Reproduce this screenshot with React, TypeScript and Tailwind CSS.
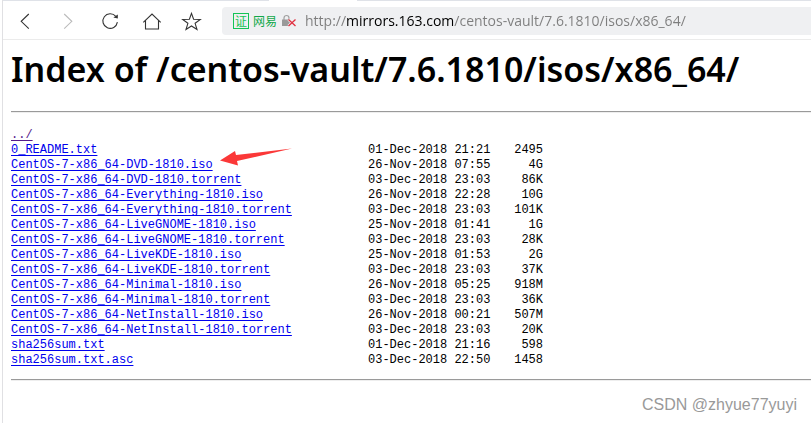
type Entry = { name: string; date: string; size: string };

const entries: Entry[] = [
  { name: "0_README.txt", date: "01-Dec-2018 21:21", size: "2495" },
  { name: "CentOS-7-x86_64-DVD-1810.iso", date: "26-Nov-2018 07:55", size: "4G" },
  { name: "CentOS-7-x86_64-DVD-1810.torrent", date: "03-Dec-2018 23:03", size: "86K" },
  { name: "CentOS-7-x86_64-Everything-1810.iso", date: "26-Nov-2018 22:28", size: "10G" },
  { name: "CentOS-7-x86_64-Everything-1810.torrent", date: "03-Dec-2018 23:03", size: "101K" },
  { name: "CentOS-7-x86_64-LiveGNOME-1810.iso", date: "25-Nov-2018 01:41", size: "1G" },
  { name: "CentOS-7-x86_64-LiveGNOME-1810.torrent", date: "03-Dec-2018 23:03", size: "28K" },
  { name: "CentOS-7-x86_64-LiveKDE-1810.iso", date: "25-Nov-2018 01:53", size: "2G" },
  { name: "CentOS-7-x86_64-LiveKDE-1810.torrent", date: "03-Dec-2018 23:03", size: "37K" },
  { name: "CentOS-7-x86_64-Minimal-1810.iso", date: "26-Nov-2018 05:25", size: "918M" },
  { name: "CentOS-7-x86_64-Minimal-1810.torrent", date: "03-Dec-2018 23:03", size: "36K" },
  { name: "CentOS-7-x86_64-NetInstall-1810.iso", date: "26-Nov-2018 00:21", size: "507M" },
  { name: "CentOS-7-x86_64-NetInstall-1810.torrent", date: "03-Dec-2018 23:03", size: "20K" },
  { name: "sha256sum.txt", date: "01-Dec-2018 21:16", size: "598" },
  { name: "sha256sum.txt.asc", date: "03-Dec-2018 22:50", size: "1458" },
];

function NavButton({ label, disabled, children }: { label: string; disabled?: boolean; children: React.ReactNode }) {
  return (
    <button
      type="button"
      aria-label={label}
      disabled={disabled}
      className="flex size-5 shrink-0 items-center justify-center text-[#333] disabled:text-[#bbb]"
    >
      <svg viewBox="0 0 20 20" className="size-5 overflow-visible" fill="none" stroke="currentColor" strokeWidth="1.1">
        {children}
      </svg>
    </button>
  );
}

function Toolbar() {
  return (
    <div className="flex h-[37px] items-center border-b border-[#ebebeb]">
      <div className="flex shrink-0 items-center gap-[22px] pl-[13px]">
        <NavButton label="Back">
          <path d="M12.8 3 L5.2 10.3 L12.8 17.6" />
        </NavButton>
        <NavButton label="Forward" disabled>
          <path d="M6.2 3 L13.8 10.3 L6.2 17.6" />
        </NavButton>
        <NavButton label="Reload">
          <path d="M15.8 5.4 A7.3 7.3 0 1 0 17.4 11.2" />
          <path d="M17.8 3.4 V7.6 L13.4 6.6 Z" fill="currentColor" stroke="none" />
        </NavButton>
        <NavButton label="Home">
          <path d="M1.3 11.4 L10 3 L18.7 11.4 M3.5 9.5 V18 H16.5 V9.5" />
        </NavButton>
        <NavButton label="Bookmark">
          <path d="M7.5 2.4 L9.6 8.2 L16.3 8.4 L11.1 12.3 L13 18.5 L7.5 15 L2 18.5 L3.9 12.3 L-1.3 8.4 L5.4 8.2 Z" />
        </NavButton>
      </div>

      <div className="ml-[18px] flex h-7 min-w-0 flex-1 items-center rounded-l bg-[#eff0f2] pl-[11px]">
        <span className="flex size-4 shrink-0 items-center justify-center border border-[#14c455] font-['Noto_Sans_CJK_SC',sans-serif] text-xs leading-none text-[#14c455]">
          证
        </span>
        <span className="ml-1 shrink-0 font-['Noto_Sans_CJK_SC',sans-serif] text-xs leading-4 text-[#12a84a]">网易</span>
        <svg viewBox="0 0 16 14" className="ml-1 h-3.5 w-4 shrink-0" aria-label="Not secure">
          <path d="M3 6 V4 A2.5 2.5 0 0 1 8 4 V6" fill="none" stroke="#a0a0a0" strokeWidth="1.2" />
          <rect x="1" y="5.5" width="8" height="6.5" fill="#999" />
          <path d="M7.5 5.5 L14.5 12 M14.5 5.5 L7.5 12" stroke="#eff0f2" strokeWidth="3" />
          <path d="M7.5 5.5 L14.5 12 M14.5 5.5 L7.5 12" stroke="#e03040" strokeWidth="1.3" />
        </svg>
        {/* host name is darker than the rest of the address */}
        <input
          type="text"
          aria-label="Address"
          defaultValue="http://mirrors.163.com/centos-vault/7.6.1810/isos/x86_64/"
          className="ml-2 min-w-0 flex-1 bg-[linear-gradient(90deg,#7d7d7d_42px,#000_42px,#000_149px,#7d7d7d_149px)] bg-clip-text font-['Open_Sans',sans-serif] text-[14px] leading-5 text-transparent outline-none"
        />
      </div>
    </div>
  );
}

export default function App() {
  return (
    <div className="relative min-h-screen bg-white pl-0.5">
      <div className="min-h-screen border-l border-[#e0e0e3]">
        {/* Bottom edge of the tab strip */}
        <div className="flex h-px">
          <div className="w-[266px] bg-[#dfe2e8]" />
          <div className="w-[88px] bg-white" />
          <div className="flex-1 bg-[#dfe2e8]" />
        </div>
        <div className="pt-0.5">
          <Toolbar />
        </div>

        <main className="pl-2">
          <h1 className="pt-1.5 font-['Noto_Sans',sans-serif] text-[34px] font-semibold leading-[46px] whitespace-nowrap text-black">
            Index of /centos-vault/7.6.1810/isos/x86_64/
          </h1>
          <hr className="mt-[19px] h-0.5 border-t border-b border-t-[#9a9a9a] border-b-[#eee]" />

          <table className="mt-[15px] w-[532px] max-w-full border-collapse font-['Liberation_Mono',monospace] text-xs leading-[15px] whitespace-nowrap text-black">
            <tbody>
              <tr>
                <td className="w-[357px] p-0" colSpan={3}>
                  <a href="#parent" className="text-[#551a8b] underline underline-offset-2 [text-decoration-skip-ink:none]">../</a>
                </td>
              </tr>
              {entries.map((entry) => (
                <tr key={entry.name}>
                  <td className="w-[357px] p-0">
                    <span className="relative">
                      <a href={"#" + entry.name} className="text-[#0000ee] underline underline-offset-2 [text-decoration-skip-ink:none]">
                        {entry.name}
                      </a>
                      {entry.name === "CentOS-7-x86_64-DVD-1810.iso" && (
                        <svg viewBox="0 0 74 18" className="absolute -top-2.5 left-[208px] h-[18px] w-[74px]" aria-hidden="true">
                          <path d="M1 12.5 L16 3 L17 7 L73 0.5 L18 13 L19 17.5 Z" fill="#fb3838" />
                        </svg>
                      )}
                    </span>
                  </td>
                  <td className="p-0">{entry.date}</td>
                  <td className="p-0 text-right">{entry.size}</td>
                </tr>
              ))}
            </tbody>
          </table>
          <hr className="mt-[11px] h-0.5 border-t border-b border-t-[#9a9a9a] border-b-[#eee]" />
        </main>
      </div>

      {/* Watermark */}
      <p className="absolute right-3.5 bottom-2 font-['Liberation_Sans',sans-serif] text-base leading-5 text-[#999]">
        CSDN @zhyue77yuyi
      </p>
    </div>
  );
}
